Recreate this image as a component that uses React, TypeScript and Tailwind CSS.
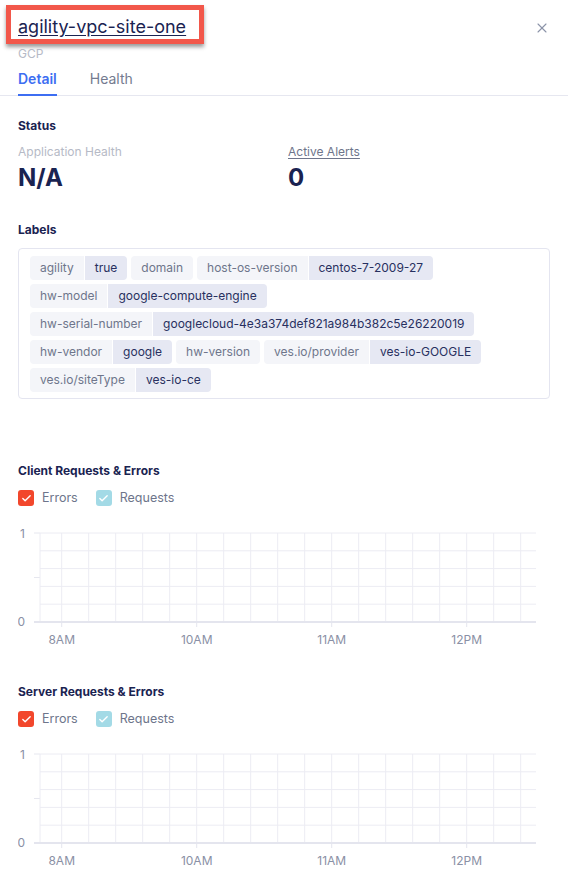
import { X, Check } from 'lucide-react';

const labels: [string, string | null][] = [
  ['agility', 'true'],
  ['domain', null],
  ['host-os-version', 'centos-7-2009-27'],
  ['hw-model', 'google-compute-engine'],
  ['hw-serial-number', 'googlecloud-4e3a374def821a984b382c5e26220019'],
  ['hw-vendor', 'google'],
  ['hw-version', null],
  ['ves.io/provider', 'ves-io-GOOGLE'],
  ['ves.io/siteType', 'ves-io-ce'],
];

function LabelChip({ k, v }: { k: string; v: string | null }) {
  return (
    <div className="flex h-6 items-stretch text-[12px] leading-6">
      <span className={`bg-[#f4f5f9] px-2.5 text-[#6e758b] ${v ? 'rounded-l' : 'rounded'}`}>{k}</span>
      {v && <span className="ml-px rounded-r bg-[#e6e8f3] px-2.5 text-[#283060]">{v}</span>}
    </div>
  );
}

function LegendBox({ color, label }: { color: string; label: string }) {
  return (
    <div className="flex items-center gap-2">
      <span className={`flex h-4 w-4 items-center justify-center rounded-[3px] ${color}`}>
        <Check size={11} strokeWidth={3} className="text-white" />
      </span>
      <span className="text-[12.5px] text-[#6e758b]">{label}</span>
    </div>
  );
}

function Chart() {
  const hLines = [10, 27.8, 45.6, 63.4, 81.2];
  const vLines = Array.from({ length: 18 }, (_, i) => 43.7 + 27 * i);
  const xLabels: [number, string][] = [
    [43.7, '8AM'],
    [178.7, '10AM'],
    [313.7, '11AM'],
    [448.7, '12PM'],
  ];
  return (
    <svg width="540" height="125" className="block">
      {hLines.map((y) => (
        <line key={y} x1={22} x2={518} y1={y} y2={y} stroke="#ececf3" strokeWidth={1} />
      ))}
      <line x1={16} x2={22} y1={10} y2={10} stroke="#e6e7ef" />
      <line x1={16} x2={22} y1={54.5} y2={54.5} stroke="#e6e7ef" />
      <line x1={16} x2={22} y1={99} y2={99} stroke="#e6e7ef" />
      <line x1={22} x2={22} y1={10} y2={99} stroke="#ececf3" />
      {vLines.map((x) => (
        <line key={x} x1={x} x2={x} y1={10} y2={99} stroke="#ececf3" strokeWidth={1} />
      ))}
      <line x1={16} x2={518} y1={99} y2={99} stroke="#e4e5ee" strokeWidth={2} />
      {xLabels.map(([x]) => (
        <line key={x} x1={x} x2={x} y1={99} y2={104} stroke="#e4e5ee" />
      ))}
      <g fill="#8a90a5" fontSize="12" fontFamily="Inter, sans-serif">
        <text x={7} y={15} textAnchor="end">1</text>
        <text x={7} y={103} textAnchor="end">0</text>
        {xLabels.map(([x, t]) => (
          <text key={t} x={x} y={121} textAnchor="middle">{t}</text>
        ))}
      </g>
    </svg>
  );
}

function ChartBlock({ title }: { title: string }) {
  return (
    <div className="h-[221px]">
      <h3 className="text-[12px] font-bold leading-4 text-[#1a2351]">{title}</h3>
      <div className="mt-[11px] flex h-4 items-center gap-[18px]">
        <LegendBox color="bg-[#f2472c]" label="Errors" />
        <LegendBox color="bg-[#a3dae6]" label="Requests" />
      </div>
      <div className="mt-[17px]">
        <Chart />
      </div>
    </div>
  );
}

export default function App() {
  return (
    <div className="min-h-[895px] w-[568px] bg-white font-['Inter',sans-serif]">
      {/* header */}
      <div className="relative h-24 border-b border-[#e6e7f0] px-[18px] pt-[5px]">
        <div className="-ml-3 flex h-[39px] w-[198px] items-start border-[5px] border-[#f2574a] bg-white pl-[7px] pt-[5px] shadow-[0_3px_4px_rgba(0,0,0,0.4)]">
          <span className="text-[18px] leading-6 text-[#1a2351] underline underline-offset-2">agility-vpc-site-one</span>
        </div>
        <div className="mt-[3px] h-[14px] text-[12px] leading-[14px] text-[#b6bac6]">GCP</div>
        <div className="mt-[8px] flex gap-[33px] text-[14px] leading-5">
          <span className="border-b-2 border-[#3d6ef2] pb-[5px] font-semibold text-[#3d6ef2]">Detail</span>
          <span className="pb-[5px] text-[#747b90]">Health</span>
        </div>
        <button className="absolute right-[18px] top-[20px] text-[#8b93a8]">
          <X size={16} strokeWidth={1.6} />
        </button>
      </div>

      <div className="px-[18px]">
        {/* status */}
        <h3 className="pt-[22px] text-[12px] font-bold leading-4 text-[#1a2351]">Status</h3>
        <div className="mt-[10px] grid grid-cols-2">
          <div>
            <div className="text-[12px] leading-4 text-[#b6bac6]">Application Health</div>
            <div className="mt-1 text-[24px] font-bold leading-7 text-[#1a2351]">N/A</div>
          </div>
          <div className="pl-1">
            <div className="text-[12px] leading-4 text-[#6e758b] underline underline-offset-2">Active Alerts</div>
            <div className="mt-1 text-[24px] font-bold leading-7 text-[#1a2351]">0</div>
          </div>
        </div>

        {/* labels */}
        <h3 className="mt-[30px] text-[12px] font-bold leading-4 text-[#1a2351]">Labels</h3>
        <div className="mt-[10px] flex h-[151px] flex-wrap content-start gap-1 rounded border border-[#e4e5f0] px-[11px] py-[7px]">
          {labels.map(([k, v]) => (
            <LabelChip key={k} k={k} v={v} />
          ))}
        </div>

        <div className="mt-[64px]">
          <ChartBlock title="Client Requests & Errors" />
          <ChartBlock title="Server Requests & Errors" />
        </div>
      </div>
    </div>
  );
}
